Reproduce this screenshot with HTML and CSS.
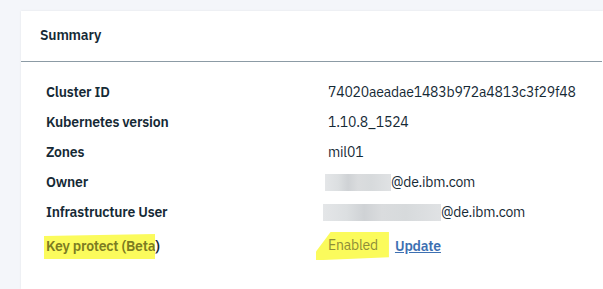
FILE: index.html
```html
<!DOCTYPE html>
<html lang="en">
<head>
<meta charset="UTF-8">
<title>Cluster Summary</title>
<link rel="stylesheet" href="styles.css">
</head>
<body>

<div class="card">
    <div class="card-header">Summary</div>
    <div class="card-body">
        <div class="row">
            <div class="label">Cluster ID</div>
            <div class="value">74020aeadae1483b972a4813c3f29f48</div>
        </div>
        <div class="row">
            <div class="label">Kubernetes version</div>
            <div class="value">1.10.8_1524</div>
        </div>
        <div class="row">
            <div class="label">Zones</div>
            <div class="value">mil01</div>
        </div>
        <div class="row">
            <div class="label">Owner</div>
            <div class="value"><span class="redacted short"></span>@de.ibm.com</div>
        </div>
        <div class="row">
            <div class="label">Infrastructure User</div>
            <div class="value shift"><span class="redacted long"></span>@de.ibm.com</div>
        </div>
        <div class="row last">
            <div class="label"><span class="marker marker-label">Key protect (Beta</span>)</div>
            <div class="value"><span class="marker marker-status">Enabled</span><a href="#" class="link">Update</a></div>
        </div>
    </div>
</div>

</body>
</html>
```

FILE: styles.css
```css
body {
    margin: 0;
    overflow: hidden;
    background-color: #f4f6fa;
    font-family: "IBM Plex Sans", "Noto Sans", Arial, sans-serif;
    font-size: 14px;
    letter-spacing: -0.2px;
    color: #152935;
}
.card {
    margin: 11px 0 0 21px;
    height: 278px;
    background-color: #fff;
    box-shadow: 0 0 2px rgba(0, 0, 0, 0.08);
}
.card-header {
    height: 50px;
    line-height: 48px;
    padding-left: 19px;
    font-weight: 600;
    border-bottom: 1px solid #8c9ba5;
    margin-right: 1px;
}
.card-body {
    padding: 15px 0 0 25px;
}
.row {
    display: flex;
    height: 30px;
    line-height: 30px;
}
.row.last {
    margin-top: 4px;
}
.label {
    width: 282px;
    font-weight: 600;
}
.value {
    display: flex;
    align-items: center;
}
.value.shift {
    margin-left: -5px;
}
.redacted {
    display: inline-block;
    height: 17px;
    background: linear-gradient(90deg, #e4e6e8 0%, #dcdfe1 20%, #cfd2d5 35%, #dadcde 50%, #d7dadc 70%, #e0e2e4 100%);
}
.redacted.short {
    width: 66px;
    margin-left: -3px;
}
.redacted.long {
    width: 118px;
}
.marker {
    background-color: #fbfb5c;
    color: #7c7c22;
}
.marker-label {
    padding: 3px 0 4px 2px;
    margin-left: -2px;
    clip-path: polygon(0 8%, 100% 0, 100% 100%, 0 100%);
}
.marker-status {
    font-weight: 400;
    color: #8d8d38;
    padding: 3px 11px 5px 12px;
    margin-left: -12px;
    line-height: 20px;
    clip-path: polygon(20% 0, 100% 0, 100% 90%, 10% 100%, 0 100%, 0 70%);
}
.link {
    margin-left: 6px;
    color: #3d70b2;
    font-weight: 600;
}
```
